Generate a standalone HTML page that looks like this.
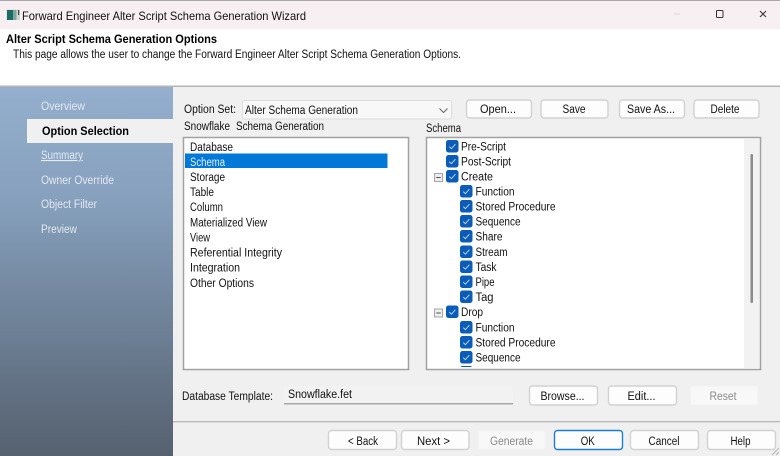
<!DOCTYPE html>
<html><head><meta charset="utf-8"><title>Forward Engineer Alter Script Schema Generation Wizard</title>
<style>
html,body{margin:0;padding:0;background:#f0f0f0;overflow:hidden}
svg{display:block;position:absolute;left:0;top:0;filter:blur(0.35px)}
text{font-family:"Liberation Sans",sans-serif;font-size:11.5px;fill:#111}
.n text{fill:#e3e9f0}
.b rect{fill:#fdfdfd;stroke:#d2d2d2;stroke-width:1.4}
.d rect{fill:#f8f8f8;stroke:#f2f2f2;stroke-width:1}
.d text{fill:#8a8a8a}
</style></head><body>
<svg width="780" height="456" viewBox="0 0 780 456" xmlns="http://www.w3.org/2000/svg">
<defs>
<linearGradient id="g" x1="0" y1="0" x2="0" y2="1"><stop offset="0" stop-color="#94afcd"/><stop offset="0.3" stop-color="#86a0bd"/><stop offset="1" stop-color="#55616f"/></linearGradient>
<g id="c"><rect x="0" y="0" width="12.5" height="12.5" rx="2.5" fill="#0b5cb8"/><path d="M3.3 6.6 L5.4 8.7 L9.4 4.2" fill="none" stroke="#b9d4ee" stroke-width="1"/></g>
<g id="e"><rect x="0.5" y="0.5" width="8" height="8" fill="#eeeeee" stroke="#a5a5a5"/><path d="M2.2 4.5 H6.8" stroke="#555" stroke-width="1"/></g>
<clipPath id="tc"><rect x="428" y="139" width="316" height="228"/></clipPath>
</defs>
<rect width="780" height="456" fill="#f0f0f0"/>
<!-- title bar -->
<rect width="780" height="29" fill="#f8eff3"/>
<rect width="780" height="1" fill="#a8a8a8"/>
<rect x="6.500" y="9.500" width="13.500" height="10.500" fill="#d0d4d4"/>
<rect x="7" y="10" width="6" height="10" fill="#1d6b66"/>
<rect x="13" y="10" width="3.500" height="10" fill="#7fa89a"/>
<rect x="18" y="10" width="1.200" height="5" fill="#444"/>
<text x="22" y="20" style="font-size:12px" textLength="284" lengthAdjust="spacingAndGlyphs">Forward Engineer Alter Script Schema Generation Wizard</text>
<path d="M674 14 H680" stroke="#dcd6d8" stroke-width="1"/>
<rect x="716.500" y="10.500" width="6.500" height="7" rx="1" fill="none" stroke="#333" stroke-width="1"/>
<path d="M760 11 L766 17 M766 11 L760 17" stroke="#333" stroke-width="1"/>
<!-- header -->
<rect y="29" width="780" height="57" fill="#fff"/>
<rect y="85.500" width="780" height="1.500" fill="#b4b4b4"/>
<text x="6" y="43" style="font-weight:bold;font-size:12px;fill:#000" textLength="211" lengthAdjust="spacingAndGlyphs">Alter Script Schema Generation Options</text>
<text x="13" y="58" textLength="448" lengthAdjust="spacingAndGlyphs">This page allows the user to change the Forward Engineer Alter Script Schema Generation Options.</text>
<!-- sidebar -->
<rect y="87" width="173" height="369" fill="url(#g)"/>
<rect x="27" y="119" width="146" height="24" fill="#f0f0f0"/>
<g class="n">
<text x="41" y="110" textLength="44" lengthAdjust="spacingAndGlyphs">Overview</text>
<text x="41" y="159" textLength="42" lengthAdjust="spacingAndGlyphs" text-decoration="underline">Summary</text>
<text x="41" y="184" textLength="73" lengthAdjust="spacingAndGlyphs">Owner Override</text>
<text x="41" y="208" textLength="56" lengthAdjust="spacingAndGlyphs">Object Filter</text>
<text x="41" y="233" textLength="36" lengthAdjust="spacingAndGlyphs">Preview</text>
</g>
<text x="42" y="135" style="font-weight:bold;fill:#000" textLength="87" lengthAdjust="spacingAndGlyphs">Option Selection</text>
<!-- top row -->
<text x="184" y="113" textLength="52" lengthAdjust="spacingAndGlyphs">Option Set:</text>
<rect x="242.500" y="100.500" width="209" height="18.500" rx="2" fill="#f8f8f8" stroke="#dcdcdc"/>
<text x="245" y="114" textLength="113" lengthAdjust="spacingAndGlyphs">Alter Schema Generation</text>
<path d="M439.500 108.500 L443.500 112.500 L447.500 108.500" fill="none" stroke="#666" stroke-width="1"/>
<g class="b">
<rect x="466.500" y="100" width="65" height="18" rx="3"/><text x="480" y="113" textLength="36" lengthAdjust="spacingAndGlyphs">Open...</text>
<rect x="541" y="100" width="67" height="18" rx="3"/><text x="562.500" y="113" textLength="23" lengthAdjust="spacingAndGlyphs">Save</text>
<rect x="619.500" y="100" width="65" height="18" rx="3"/><text x="627" y="113" textLength="48" lengthAdjust="spacingAndGlyphs">Save As...</text>
<rect x="694" y="100" width="65" height="18" rx="3"/><text x="710.500" y="113" textLength="29" lengthAdjust="spacingAndGlyphs">Delete</text>
</g>
<text x="184" y="130" textLength="46" lengthAdjust="spacingAndGlyphs">Snowflake</text>
<text x="236" y="130" textLength="88" lengthAdjust="spacingAndGlyphs">Schema Generation</text>
<text x="426" y="132" textLength="35" lengthAdjust="spacingAndGlyphs">Schema</text>
<!-- left list -->
<rect x="183.500" y="137.500" width="225" height="232" fill="#fff" stroke="#a2a2a2" stroke-width="1.500"/>
<rect x="185" y="153.500" width="202.500" height="14.500" fill="#0078d7"/>
<text x="190" y="151" textLength="43" lengthAdjust="spacingAndGlyphs">Database</text>
<text x="190" y="166" style="fill:#e6f1fb" textLength="35" lengthAdjust="spacingAndGlyphs">Schema</text>
<text x="190" y="181" textLength="35" lengthAdjust="spacingAndGlyphs">Storage</text>
<text x="190" y="196" textLength="24" lengthAdjust="spacingAndGlyphs">Table</text>
<text x="190" y="211" textLength="33" lengthAdjust="spacingAndGlyphs">Column</text>
<text x="190" y="226.500" textLength="77" lengthAdjust="spacingAndGlyphs">Materialized View</text>
<text x="190" y="241.500" textLength="20" lengthAdjust="spacingAndGlyphs">View</text>
<text x="190" y="256.500" textLength="92" lengthAdjust="spacingAndGlyphs">Referential Integrity</text>
<text x="190" y="271.500" textLength="50" lengthAdjust="spacingAndGlyphs">Integration</text>
<text x="190" y="287" textLength="64" lengthAdjust="spacingAndGlyphs">Other Options</text>
<!-- right tree -->
<rect x="426.500" y="137.500" width="334" height="232" fill="#fff" stroke="#a2a2a2" stroke-width="1.500"/>
<rect x="744" y="139" width="15.500" height="229" fill="#f2f2f2"/>
<rect x="750.500" y="154" width="2.500" height="149" rx="1" fill="#8b8b8b"/>
<g clip-path="url(#tc)">
<use href="#c" x="446" y="140"/><text x="461" y="150.500" textLength="45" lengthAdjust="spacingAndGlyphs">Pre-Script</text>
<use href="#c" x="446" y="155"/><text x="461" y="165.500" textLength="50" lengthAdjust="spacingAndGlyphs">Post-Script</text>
<use href="#e" x="434" y="173"/><use href="#c" x="446" y="170"/><text x="461" y="180.500" textLength="32" lengthAdjust="spacingAndGlyphs">Create</text>
<use href="#c" x="460" y="185"/><text x="475.500" y="195.500" textLength="39" lengthAdjust="spacingAndGlyphs">Function</text>
<use href="#c" x="460" y="200"/><text x="475.500" y="210.500" textLength="80" lengthAdjust="spacingAndGlyphs">Stored Procedure</text>
<use href="#c" x="460" y="215"/><text x="475.500" y="225.500" textLength="45" lengthAdjust="spacingAndGlyphs">Sequence</text>
<use href="#c" x="460" y="230"/><text x="475.500" y="240.500" textLength="27" lengthAdjust="spacingAndGlyphs">Share</text>
<use href="#c" x="460" y="245.500"/><text x="475.500" y="256" textLength="32" lengthAdjust="spacingAndGlyphs">Stream</text>
<use href="#c" x="460" y="260.500"/><text x="475.500" y="271" textLength="21" lengthAdjust="spacingAndGlyphs">Task</text>
<use href="#c" x="460" y="275.500"/><text x="475.500" y="286" textLength="19" lengthAdjust="spacingAndGlyphs">Pipe</text>
<use href="#c" x="460" y="290.500"/><text x="475.500" y="301" textLength="18" lengthAdjust="spacingAndGlyphs">Tag</text>
<use href="#e" x="434" y="308.500"/><use href="#c" x="446" y="305.500"/><text x="461" y="316" textLength="22" lengthAdjust="spacingAndGlyphs">Drop</text>
<use href="#c" x="460" y="321"/><text x="475.500" y="331.500" textLength="39" lengthAdjust="spacingAndGlyphs">Function</text>
<use href="#c" x="460" y="336"/><text x="475.500" y="346.500" textLength="80" lengthAdjust="spacingAndGlyphs">Stored Procedure</text>
<use href="#c" x="460" y="351"/><text x="475.500" y="361.500" textLength="45" lengthAdjust="spacingAndGlyphs">Sequence</text>
<use href="#c" x="460" y="366"/>
</g>
<!-- template row -->
<text x="182" y="400" textLength="91" lengthAdjust="spacingAndGlyphs">Database Template:</text>
<rect x="284" y="386" width="229" height="18" fill="#f2f2f2"/>
<rect x="284" y="403" width="229" height="1.500" fill="#a8a8a8"/>
<text x="288" y="398" textLength="64" lengthAdjust="spacingAndGlyphs">Snowflake.fet</text>
<g class="b">
<rect x="529.500" y="386" width="68" height="19" rx="3"/><text x="540.500" y="400" textLength="44" lengthAdjust="spacingAndGlyphs">Browse...</text>
<rect x="608.500" y="386" width="68" height="19" rx="3"/><text x="627.500" y="400" textLength="28" lengthAdjust="spacingAndGlyphs">Edit...</text>
</g>
<g class="d"><rect x="690.500" y="386" width="67.500" height="19" rx="2"/><text x="709.500" y="400" textLength="27" lengthAdjust="spacingAndGlyphs">Reset</text></g>
<!-- footer -->
<rect x="173" y="421" width="607" height="1.300" fill="#b8b8b8"/>
<g class="b">
<rect x="328.500" y="430.500" width="68" height="19" rx="3"/><text x="348" y="445" textLength="30" lengthAdjust="spacingAndGlyphs">&lt; Back</text>
<rect x="401.500" y="430.500" width="67.500" height="19" rx="3"/><text x="417" y="445" textLength="33" lengthAdjust="spacingAndGlyphs">Next &gt;</text>
<rect x="630.500" y="430.500" width="68" height="19" rx="3"/><text x="648.500" y="445" textLength="31" lengthAdjust="spacingAndGlyphs">Cancel</text>
<rect x="707.500" y="430.500" width="68" height="19" rx="3"/><text x="730.500" y="445" textLength="20" lengthAdjust="spacingAndGlyphs">Help</text>
<rect x="554.500" y="430.500" width="68" height="19" rx="3" style="stroke:#1a7fd4"/><text x="580.700" y="445" textLength="14" lengthAdjust="spacingAndGlyphs">OK</text>
</g>
<g class="d"><rect x="478.500" y="430.500" width="66.500" height="19" rx="2"/><text x="490" y="445" textLength="43" lengthAdjust="spacingAndGlyphs">Generate</text></g>
<path d="M772 455 L779 448 M776 455 L779 452" stroke="#b5b5b5" stroke-width="1"/>
</svg>
</body></html>
